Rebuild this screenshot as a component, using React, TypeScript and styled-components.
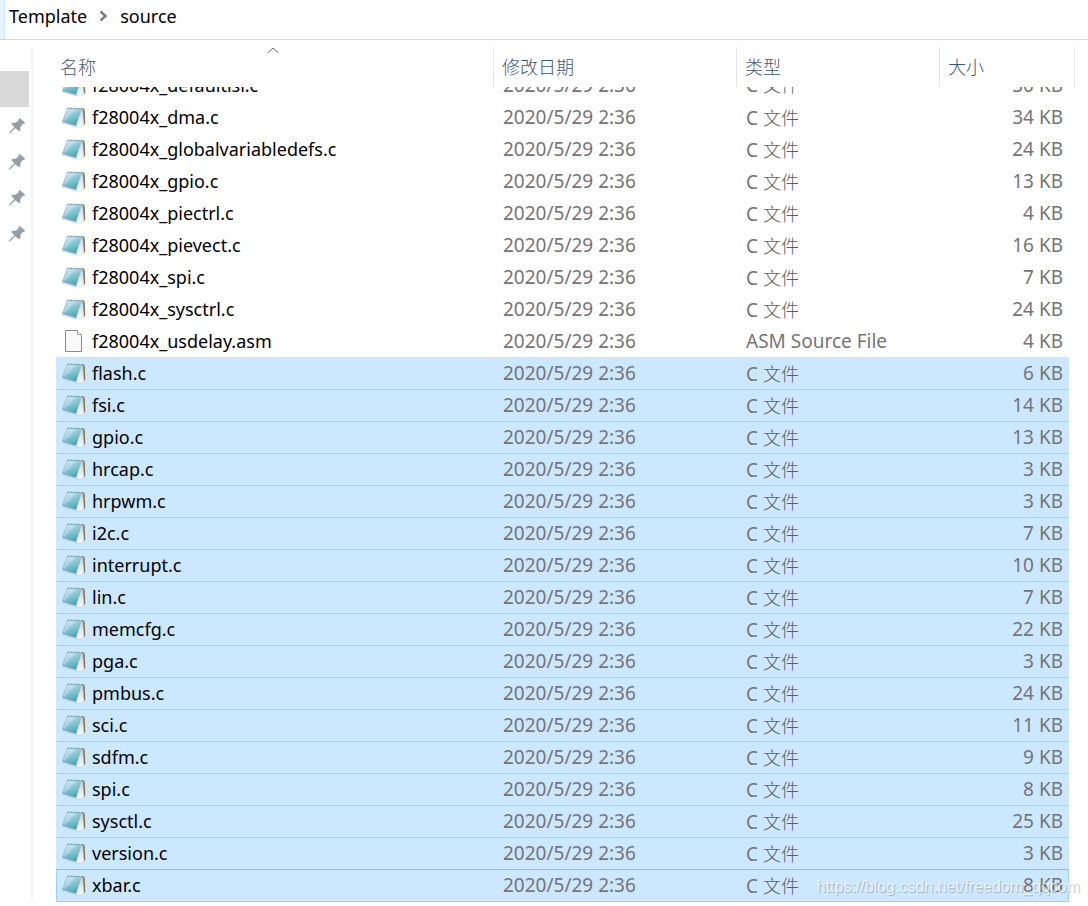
import React from "react";
import styled, { createGlobalStyle, css } from "styled-components";

const GlobalStyle = createGlobalStyle`
  * { box-sizing: border-box; }
  body {
    margin: 0;
    background: #fff;
    color: #000;
    font-family: "Noto Sans", "Noto Sans CJK SC", sans-serif;
    font-size: 18px;
    line-height: 24px;
  }
`;

const Explorer = styled.div`
  position: relative;
  min-height: 100vh;
  overflow: hidden;
`;

const AddressBar = styled.nav`
  display: flex;
  align-items: stretch;
  height: 40px;
  border-bottom: 1px solid #d9d9d9;
`;

const HotEdge = styled.div`
  width: 5px;
  background: #e5f3ff;
  border-right: 1px solid #cce8ff;
`;

const Crumbs = styled.div`
  display: flex;
  align-items: center;
  gap: 12px;
  padding: 0 4px 8px;
`;

const Crumb = styled.a`
  color: #000;
  text-decoration: none;
`;

const Body = styled.div`
  display: flex;
  padding: 7px 13px 4px 0;
`;

const Side = styled.aside`
  flex: none;
  width: 33px;
  padding-top: 24px;
  border-right: 2px solid #f5f5f5;
`;

const QuickItem = styled.div<{ $active?: boolean }>`
  display: flex;
  align-items: center;
  width: 29px;
  height: 36px;
  padding-left: 9px;
  background: ${(p) => (p.$active ? "#d9d9d9" : "transparent")};
`;

const Main = styled.main`
  flex: 1;
  min-width: 0;
  padding-left: 23px;
`;

const Table = styled.table`
  width: 100%;
  table-layout: fixed;
  border-collapse: separate;
  border-spacing: 0;
`;

const Col = styled.col<{ $w?: number }>`
  width: ${(p) => (p.$w ? `${p.$w}px` : "auto")};
`;

const HeadCell = styled.th`
  height: 40px;
  padding: 0;
  border-right: 1px solid #e5e5e5;
  font-weight: 400;
`;

const SortButton = styled.button<{ $first?: boolean }>`
  display: flex;
  flex-direction: column;
  justify-content: flex-end;
  width: 100%;
  height: 40px;
  padding: 0 ${(p) => (p.$first ? "8px 8px 4px" : "8px 8px 8px")};
  border: 0;
  background: none;
  color: #3f5678;
  font: inherit;
  font-weight: 300;
  text-align: left;
`;

const SortArrow = styled.svg`
  align-self: center;
  margin-bottom: 1px;
`;

const selected = css`
  background: #cce8ff;
  border-top: 1px solid #99d1ff;
`;

const Row = styled.tr<{ $state: "plain" | "first" | "selected" | "focused" }>`
  td {
    ${(p) => p.$state !== "plain" && selected}
    ${(p) => p.$state === "first" && "border-top-color: #cce8ff;"}
    ${(p) =>
      p.$state === "focused" &&
      "border-top-color: #7ac3fb; border-bottom: 1px solid #99d1ff;"}
  }
  td:first-child {
    border-left: 1px solid ${(p) => (p.$state === "focused" ? "#99d1ff" : "transparent")};
  }
  td:last-child {
    border-right: 1px solid ${(p) => (p.$state === "focused" ? "#99d1ff" : "transparent")};
  }
`;

const Cell = styled.td<{ $right?: boolean }>`
  padding: 0 5px 0 ${(p) => (p.$right ? 0 : 9)}px;
  color: #757575;
  font-size: 19px;

  &:first-child {
    padding-left: 5px;
    color: #000;
    font-size: 18px;
  }
`;

const Han = styled.span`
  font-family: "Noto Sans CJK SC", sans-serif;
  font-size: 18px;
  font-weight: 300;
  color: #606060;
`;

const Line = styled.div<{ $cut?: boolean; $bordered?: boolean; $right?: boolean }>`
  display: flex;
  align-items: ${(p) => (p.$cut ? "flex-end" : "center")};
  justify-content: ${(p) => (p.$right ? "flex-end" : "flex-start")};
  gap: 6px;
  height: ${(p) => (p.$cut ? 14 : p.$bordered ? 31 : 32)}px;
  padding-bottom: ${(p) => (p.$cut ? 4 : p.$bordered ? 1 : 0)}px;
  overflow: hidden;
  white-space: nowrap;
`;

const Watermark = styled.div`
  position: absolute;
  right: 8px;
  bottom: 7px;
  color: rgba(255, 255, 255, 0.75);
  font-family: "Liberation Sans", sans-serif;
  font-size: 16px;
  text-shadow: 1px 1px 1px rgba(0, 0, 0, 0.25);
  pointer-events: none;
`;

const Pin = () => (
  <svg width="16" height="17" viewBox="0 -3 48 51" aria-hidden="true">
    <path
      fill="#939fa6"
      d="M29 2 32 0 47 13 47 17 41 18 34 27 34 37 30 40 19 31 4 45 0 47 1 43 16 28 7 18 9 14 20 14 29 7Z"
    />
  </svg>
);

const IconDefs = () => (
  <svg width="0" height="0" style={{ display: "block" }} aria-hidden="true">
    <defs>
      <linearGradient id="pad" x1="0.3" y1="0" x2="0.7" y2="1">
        <stop offset="0" stopColor="#b5dfe8" />
        <stop offset="0.5" stopColor="#7fc3d0" />
        <stop offset="1" stopColor="#3fa3b8" />
      </linearGradient>
      <linearGradient id="sheet" x1="0" y1="0" x2="0" y2="1">
        <stop offset="0" stopColor="#c9d6dd" />
        <stop offset="1" stopColor="#f7fafb" />
      </linearGradient>
    </defs>
  </svg>
);

const NotepadIcon = () => (
  <svg width="24" height="22" viewBox="0 0 72 66" aria-hidden="true">
    <path fill="#8f7a55" d="M59 7 68 9 70 53 63 60Z" />
    <path fill="url(#sheet)" d="M57 8 62 9 66 58 55 64 40 60Z" stroke="#a7b4bb" strokeWidth="1" />
    <path fill="#dce8ec" stroke="#a9bac1" strokeWidth="1" d="M1 47 42 59 45 63 41 63 0 51Z" />
    <path fill="url(#pad)" d="M15 7 58 9 42 59 1 47Z" stroke="#7ba6b3" strokeWidth="1" />
    <path fill="#e4f5f8" opacity="0.35" d="M17 10 43 10 12 40 4 43Z" />
    <path stroke="#76868c" strokeWidth="3" strokeDasharray="3 2" d="M17 6 64 8" />
  </svg>
);

const BlankIcon = () => (
  <svg width="24" height="24" viewBox="0 0 24 24" aria-hidden="true">
    <path fill="#fafafa" stroke="#8b8b8b" d="M3.5 1.5H15.5L19.5 5.5V22.5H3.5Z" />
    <path fill="#fff" stroke="#a0a0a0" d="M15.5 1.5V5.5H19.5" />
  </svg>
);

const DATE = "2020/5/29 2:36";

const files: [string, number][] = [
  ["f28004x_defaultisr.c", 30],
  ["f28004x_dma.c", 34],
  ["f28004x_globalvariabledefs.c", 24],
  ["f28004x_gpio.c", 13],
  ["f28004x_piectrl.c", 4],
  ["f28004x_pievect.c", 16],
  ["f28004x_spi.c", 7],
  ["f28004x_sysctrl.c", 24],
  ["f28004x_usdelay.asm", 4],
  ["flash.c", 6],
  ["fsi.c", 14],
  ["gpio.c", 13],
  ["hrcap.c", 3],
  ["hrpwm.c", 3],
  ["i2c.c", 7],
  ["interrupt.c", 10],
  ["lin.c", 7],
  ["memcfg.c", 22],
  ["pga.c", 3],
  ["pmbus.c", 24],
  ["sci.c", 11],
  ["sdfm.c", 9],
  ["spi.c", 8],
  ["sysctl.c", 25],
  ["version.c", 3],
  ["xbar.c", 8],
];

const FIRST_SELECTED = 9;

const stateOf = (i: number) => {
  if (i < FIRST_SELECTED) return "plain";
  if (i === FIRST_SELECTED) return "first";
  return i === files.length - 1 ? "focused" : "selected";
};

export default function App() {
  return (
    <Explorer>
      <GlobalStyle />
      <IconDefs />
      <AddressBar>
        <HotEdge />
        <Crumbs>
          <Crumb href="#template">Template</Crumb>
          <svg width="9" height="12" viewBox="0 0 9 12" aria-hidden="true">
            <path d="M1.5 1.5 6.5 6 1.5 10.5" fill="none" stroke="#7a7a7a" strokeWidth="2.4" />
          </svg>
          <Crumb href="#source">source</Crumb>
        </Crumbs>
      </AddressBar>
      <Body>
        <Side>
          <QuickItem $active />
          {[0, 1, 2, 3].map((n) => (
            <QuickItem key={n}>
              <Pin />
            </QuickItem>
          ))}
        </Side>
        <Main>
          <Table>
            <colgroup>
              <Col />
              <Col $w={243} />
              <Col $w={203} />
              <Col $w={129} />
              <Col $w={6} />
            </colgroup>
            <thead>
              <tr>
                <HeadCell aria-sort="ascending">
                  <SortButton $first>
                    <SortArrow width="12" height="7" viewBox="0 0 12 7" aria-hidden="true">
                      <path d="M0.5 6 6 1 11.5 6" fill="none" stroke="#6a6a6a" />
                    </SortArrow>
                    名称
                  </SortButton>
                </HeadCell>
                <HeadCell>
                  <SortButton>修改日期</SortButton>
                </HeadCell>
                <HeadCell>
                  <SortButton>类型</SortButton>
                </HeadCell>
                <HeadCell colSpan={2}>
                  <SortButton>大小</SortButton>
                </HeadCell>
              </tr>
            </thead>
            <tbody>
              {files.map(([name, size], i) => {
                const cut = i === 0;
                const bordered = i >= FIRST_SELECTED;
                const asm = name.endsWith(".asm");
                return (
                  <Row key={name} $state={stateOf(i)}>
                    <Cell>
                      <Line $cut={cut} $bordered={bordered}>
                        {asm ? <BlankIcon /> : <NotepadIcon />}
                        {name}
                      </Line>
                    </Cell>
                    <Cell>
                      <Line $cut={cut} $bordered={bordered}>{DATE}</Line>
                    </Cell>
                    <Cell>
                      <Line $cut={cut} $bordered={bordered}>
                        {asm ? "ASM Source File" : <span>C <Han>文件</Han></span>}
                      </Line>
                    </Cell>
                    <Cell $right>
                      <Line $cut={cut} $bordered={bordered} $right>{size} KB</Line>
                    </Cell>
                  </Row>
                );
              })}
            </tbody>
          </Table>
        </Main>
      </Body>
      <Watermark>https://blog.csdn.net/freedom_qqcom</Watermark>
    </Explorer>
  );
}
